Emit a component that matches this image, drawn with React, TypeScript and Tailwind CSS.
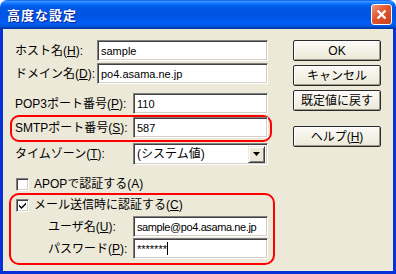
import React from "react";

const ui = "font-['Liberation_Sans','Noto_Sans_CJK_JP',sans-serif] text-[12px] leading-[14px] text-black";

function Field({ value, className }: { value: React.ReactNode; className: string }) {
  return (
    <div
      className={`h-[21px] bg-white border border-t-[#808080] border-l-[#808080] border-b-white border-r-white shadow-[inset_1px_1px_0_#404040,inset_-1px_-1px_0_#D4D0C8] flex items-center pl-[3px] text-[11px] whitespace-nowrap overflow-hidden ${className}`}
    >
      {value}
    </div>
  );
}

function Key({ k }: { k: string }) {
  return (
    <>
      (<span className="underline underline-offset-[1px]">{k}</span>)
    </>
  );
}

function Check({ checked }: { checked?: boolean }) {
  return (
    <div className="w-[13px] h-[13px] shrink-0 bg-white border border-t-[#808080] border-l-[#808080] border-b-white border-r-white shadow-[inset_1px_1px_0_#404040,inset_-1px_-1px_0_#D4D0C8] flex items-center justify-center">
      {checked && (
        <svg width="9" height="9" viewBox="0 0 9 9">
          <path d="M1 3.5 L3.5 6 L8 1.5 L8 3.5 L3.5 8 L1 5.5 Z" fill="#000" />
        </svg>
      )}
    </div>
  );
}

function Btn({ children, className = "" }: { children: React.ReactNode; className?: string }) {
  return (
    <div
      className={`w-[88px] h-[21px] flex items-center justify-center rounded-[2px] border border-[#2a2a2a] bg-[linear-gradient(to_bottom,#FBFAF6,#ECE9D8)] shadow-[inset_1px_1px_0_#fff,inset_-1px_-1px_0_#9d9a8c] ${className}`}
    >
      {children}
    </div>
  );
}

export default function App() {
  return (
    <div className={`w-[396px] h-[274px] flex flex-col bg-white ${ui}`}>
      {/* title bar */}
      <div className="h-[29px] shrink-0 rounded-t-[7px] flex items-center justify-between pl-[7px] pr-[4px] bg-[linear-gradient(to_bottom,#0058EE_0%,#3A93FF_5%,#1C7EFF_10%,#0468F8_16%,#0058E6_26%,#0054E3_45%,#0056EA_65%,#005FF6_78%,#0059E8_88%,#0044BE_95%,#003399_100%)]">
        <span className="text-white font-bold text-[13px] leading-[16px] font-['Noto_Sans_CJK_JP',sans-serif] [text-shadow:1px_1px_0_#0a1f8f] tracking-[1px]">
          高度な設定
        </span>
        <div className="w-[21px] h-[21px] rounded-[3px] border border-white bg-[linear-gradient(135deg,#F0977A,#E0542E_45%,#C9401E)] flex items-center justify-center">
          <svg width="11" height="11" viewBox="0 0 11 11">
            <path d="M1.5 1.5 L9.5 9.5 M9.5 1.5 L1.5 9.5" stroke="#fff" strokeWidth="2.4" />
          </svg>
        </div>
      </div>

      {/* body */}
      <div className="flex-1 min-h-0 flex bg-[#ECE9D8] border-x-[3px] border-b-[3px] border-x-[#0831D9] border-b-[#0831D9]">
        {/* form */}
        <div className="ml-[6px] w-[266px] pt-[11px] flex flex-col">
          <div className="flex items-center pl-[6px]">
            <span className="w-[82px]">ホスト名<Key k="H" />:</span>
            <Field className="w-[171px]" value="sample" />
          </div>
          <div className="flex items-center pl-[6px] mt-[2px]">
            <span className="w-[82px]">ドメイン名<Key k="D" />:</span>
            <Field className="w-[171px]" value="po4.asama.ne.jp" />
          </div>
          <div className="flex items-center pl-[6px] mt-[9px]">
            <span className="w-[118px]">POP3ポート番号<Key k="P" />:</span>
            <Field className="w-[135px]" value="110" />
          </div>
          <div className="ml-[1px] w-[262px] mt-[1px] border-2 border-[#f00] rounded-[9px] pb-[2px] flex items-center pl-[3px]">
            <span className="w-[118px]">SMTPポート番号<Key k="S" />:</span>
            <Field className="w-[135px]" value="587" />
          </div>
          <div className="flex items-center pl-[6px] mt-[1px]">
            <span className="w-[118px]">タイムゾーン<Key k="T" />:</span>
            <div className="w-[135px] h-[22px] bg-white border border-t-[#808080] border-l-[#808080] border-b-white border-r-white shadow-[inset_1px_1px_0_#404040,inset_-1px_-1px_0_#D4D0C8] flex items-center pl-[3px] pr-[2px] py-[2px]">
              <span className="flex-1">(システム値)</span>
              <div className="w-[17px] h-[17px] bg-[#ECE9D8] border border-t-[#ECE9D8] border-l-[#ECE9D8] border-b-[#404040] border-r-[#404040] shadow-[inset_1px_1px_0_#fff,inset_-1px_-1px_0_#808080] flex items-center justify-center">
                <svg width="7" height="4" viewBox="0 0 7 4">
                  <path d="M0 0 H7 L3.5 4 Z" fill="#000" />
                </svg>
              </div>
            </div>
          </div>
          <div className="flex items-center pl-[7px] mt-[12px] gap-[5px]">
            <Check />
            <span>APOPで認証する(A)</span>
          </div>
          <div className="mt-[2px] border-2 border-[#f00] rounded-[10px] pt-[3px] pb-[4px] pl-[5px] flex flex-col">
            <div className="flex items-center gap-[5px]">
              <Check checked />
              <span>メール送信時に認証する<Key k="C" /></span>
            </div>
            <div className="flex items-center mt-[4px] pl-[32px]">
              <span className="w-[85px]">ユーザ名<Key k="U" />:</span>
              <Field className="w-[135px] tracking-[-0.4px]" value="sample@po4.asama.ne.jp" />
            </div>
            <div className="flex items-center mt-[1px] pl-[32px]">
              <span className="w-[85px]">パスワード<Key k="P" />:</span>
              <Field
                className="w-[135px]"
                value={
                  <>
                    *******<span className="inline-block w-px h-[13px] bg-black" />
                  </>
                }
              />
            </div>
          </div>
        </div>

        {/* buttons */}
        <div className="ml-[18px] pt-[11px] flex flex-col">
          <Btn>OK</Btn>
          <Btn className="mt-[4px]">キャンセル</Btn>
          <Btn className="mt-[4px]">既定値に戻す</Btn>
          <Btn className="mt-[15px]">
            ヘルプ<Key k="H" />
          </Btn>
        </div>
      </div>
    </div>
  );
}
